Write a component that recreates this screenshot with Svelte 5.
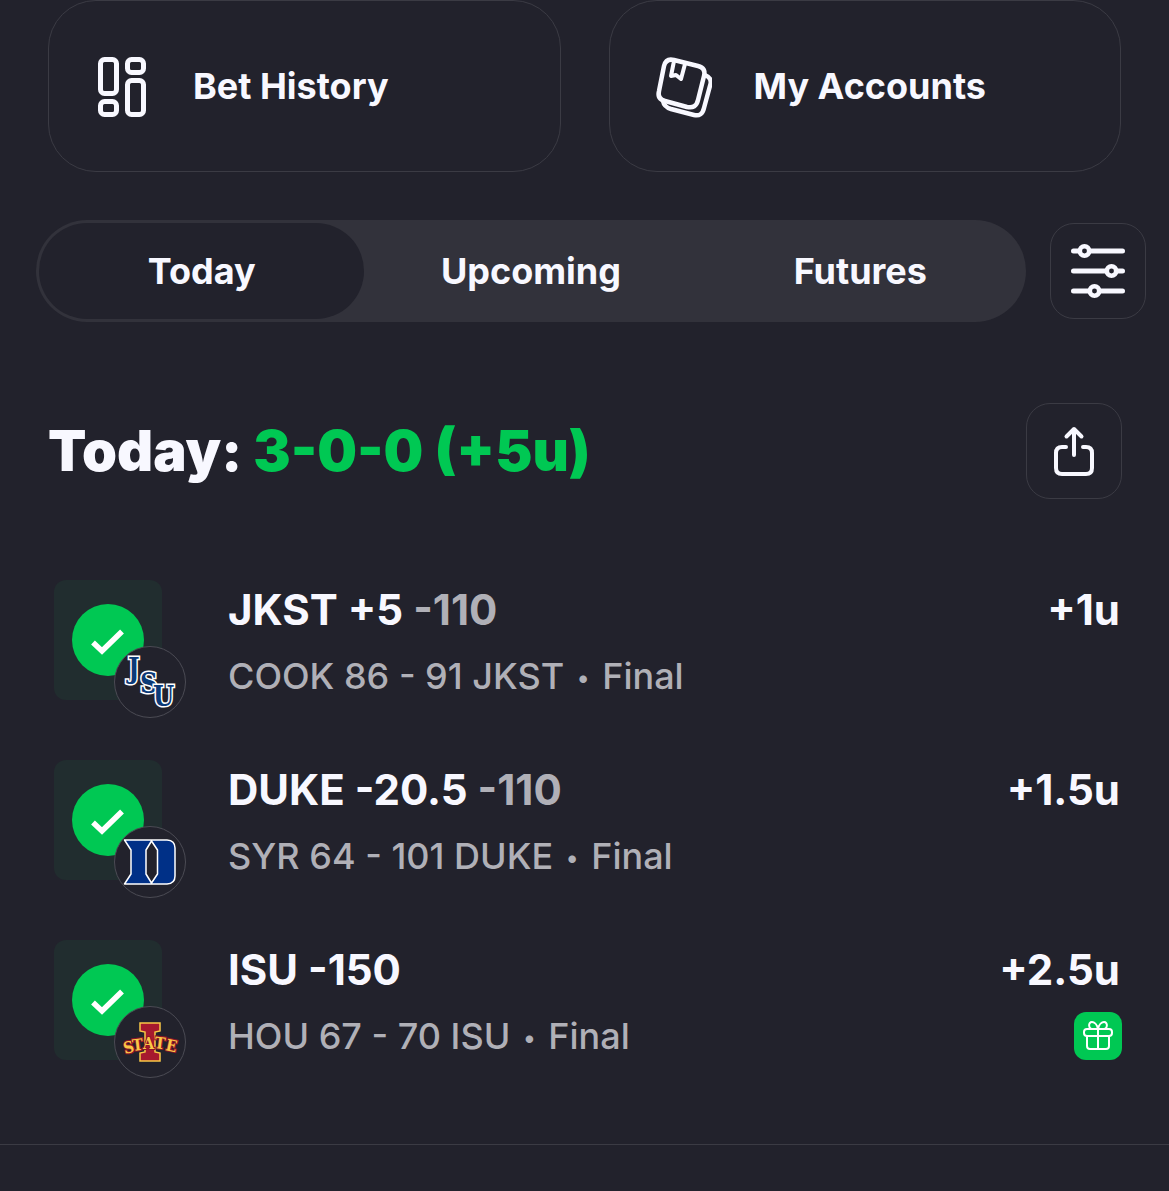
<script>
    const tabs = ["Today", "Upcoming", "Futures"];
    let activeTab = $state("Today");

    const bets = [
        {
            team: "jsu",
            pick: "JKST +5",
            odds: "-110",
            score: "COOK 86 - 91 JKST",
            status: "Final",
            units: "+1u",
        },
        {
            team: "duke",
            pick: "DUKE -20.5",
            odds: "-110",
            score: "SYR 64 - 101 DUKE",
            status: "Final",
            units: "+1.5u",
        },
        {
            team: "isu",
            pick: "ISU -150",
            odds: "",
            score: "HOU 67 - 70 ISU",
            status: "Final",
            units: "+2.5u",
            bonus: true,
        },
    ];
</script>

<main>
    <nav class="links" aria-label="Account">
        <a class="card" href="#history">
            <svg width="60" height="72" viewBox="0 0 60 72" fill="none" stroke="currentColor" stroke-width="5">
                <rect x="9.500" y="9.500" width="16" height="34" rx="4" />
                <rect x="36.500" y="9.500" width="16" height="13" rx="4" />
                <rect x="9.500" y="51.500" width="16" height="13" rx="4" />
                <rect x="36.500" y="30.500" width="16" height="34" rx="4" />
            </svg>
            <span>Bet History</span>
        </a>
        <a class="card" href="#accounts">
            <svg width="60" height="72" viewBox="0 0 60 72" fill="none" stroke="currentColor" stroke-width="4.500" stroke-linejoin="round" stroke-linecap="round">
                <path d="M22 10 L46 16 Q54 18 52 26 L46 50 Q44 59 35 57 L13 51 Q5 49 7 41 L12 16 Q14 8 22 10Z" />
                <path d="M53 25 Q60 28 58.500 34 L52 58 Q50 67 42 65 L19 59 Q12 57 11 51" />
                <path stroke-width="4" d="M22 11 L19 26 L24 25 L29 29 L33 14" />
            </svg>
            <span>My Accounts</span>
        </a>
    </nav>

    <div class="filters">
        <div class="tabs" role="tablist">
            {#each tabs as tab}
                <button
                    role="tab"
                    class:active={activeTab === tab}
                    aria-selected={activeTab === tab}
                    onclick={() => (activeTab = tab)}
                >
                    {tab}
                </button>
            {/each}
        </div>
        <button class="square" aria-label="Filters">
            <svg width="60" height="60" viewBox="0 0 60 60" fill="none" stroke="currentColor" stroke-linecap="round">
                <path stroke-width="5" d="M5.500 10H54.500M5.500 30H54.500M5.500 50H54.500" />
                <g fill="#22222c" stroke-width="4.500">
                    <circle cx="16.500" cy="10" r="4.700" />
                    <circle cx="43.500" cy="30" r="4.700" />
                    <circle cx="26.500" cy="50" r="4.700" />
                </g>
            </svg>
        </button>
    </div>

    <header>
        <h1>Today: <span>3-0-0 (+5u)</span></h1>
        <button class="square" aria-label="Share">
            <svg width="60" height="60" viewBox="0 0 60 60" fill="none" stroke="currentColor" stroke-width="4" stroke-linecap="round" stroke-linejoin="round">
                <path d="M22 26H18Q12 26 12 32V47Q12 53 18 53H42Q48 53 48 47V32Q48 26 42 26H39" />
                <path d="M30 34V8M22.500 15.500L30 8L37.500 15.500" />
            </svg>
        </button>
    </header>

    <ul>
        {#each bets as bet}
            <li>
                <div class="result">
                    <div class="tile">
                        <svg width="72" height="72" viewBox="0 0 72 72" role="img" aria-label="Won">
                            <circle cx="36" cy="36" r="36" fill="#00c853" />
                            <path d="M21 38.500L30 47L50 27.500" fill="none" stroke="#fff" stroke-width="5.500" />
                        </svg>
                    </div>
                    <div class="badge">
                        {#if bet.team === "jsu"}
                            <svg viewBox="0 0 70 70" class="jsu">
                                <text x="13 25 38" y="31 46 59">JSU</text>
                            </svg>
                        {:else if bet.team === "duke"}
                            <svg viewBox="0 0 70 70" stroke="#fff" stroke-width="1.500" stroke-linejoin="round">
                                <path fill="#003087" fill-rule="evenodd" d="M9.500 13H52Q60 13.500 60 21V49Q60 56.500 52 57H9.500L16 47V23ZM36.500 14L31 23V47L36.500 56L42.500 47V23Z" />
                            </svg>
                        {:else}
                            <svg viewBox="0 0 70 70" class="isu">
                                <path fill="#a6192e" stroke="#f9c846" stroke-width="1.500" d="M25 16H45V24L40 25V45L45 46V54H25V46L30 45V25L25 24Z" />
                                <text x="10 18 28 39 50" y="47 44 42 41 43" rotate="-14 -7 0 7 12">STATE</text>
                            </svg>
                        {/if}
                    </div>
                </div>
                <div class="info">
                    <strong>{bet.pick} <span>{bet.odds}</span></strong>
                    <p>{bet.score} <span class="dot">•</span> {bet.status}</p>
                </div>
                <div class="units">
                    <strong>{bet.units}</strong>
                    {#if bet.bonus}
                        <svg class="gift" viewBox="0 0 48 48" fill="none" stroke="#fff" stroke-width="2" stroke-linejoin="round" role="img" aria-label="Bonus bet">
                            <rect x="10" y="17" width="28" height="7" rx="3" />
                            <path d="M13 24V34Q13 37 16 37H32Q35 37 35 34V24M24 17V37" />
                            <path d="M24 17C23 12 20 10 18 10C14 10 14 17 19 17M24 17C25 12 28 10 30 10C34 10 34 17 29 17" />
                        </svg>
                    {/if}
                </div>
            </li>
        {/each}
    </ul>
    <hr />
</main>

<style>
    :global(body) {
        background: #22222c;
        color: #f8f8ff;
        font-family: Inter, sans-serif;
    }

    svg {
        display: block;
        flex-shrink: 0;
    }

    button {
        padding: 0;
        border: 0;
        background: none;
        color: inherit;
        font: inherit;
        cursor: pointer;
    }

    .links {
        display: grid;
        grid-template-columns: 1fr 1fr;
        gap: 48px;
        padding: 0 48px;
    }

    .card {
        display: flex;
        align-items: center;
        gap: 42px;
        padding: 49px 42px;
        border: 1px solid #3b3b44;
        border-radius: 48px;
        color: inherit;
        font-size: 36px;
        font-weight: 700;
        line-height: 48px;
        text-decoration: none;
    }

    .filters {
        display: flex;
        align-items: center;
        gap: 24px;
        padding: 48px 23px 0 36px;
    }

    .tabs {
        display: flex;
        flex: 1;
        gap: 4px;
        padding: 3px;
        border-radius: 52px;
        background: #32323b;
    }

    .tabs button {
        flex: 1;
        border-radius: 48px;
        font-size: 36px;
        font-weight: 700;
        line-height: 96px;
    }

    .tabs .active {
        background: #22222c;
    }

    .square {
        display: flex;
        align-items: center;
        justify-content: center;
        flex-shrink: 0;
        box-sizing: border-box;
        width: 96px;
        height: 96px;
        border: 1px solid #3b3b44;
        border-radius: 24px;
    }

    header {
        display: flex;
        align-items: center;
        justify-content: space-between;
        padding: 81px 47px 0 48px;
    }

    h1 {
        margin: 0;
        font-size: 56px;
        font-weight: 900;
        line-height: 72px;
    }

    h1 span {
        color: #00c853;
    }

    ul {
        display: grid;
        gap: 42px;
        margin: 0;
        padding: 81px 47px 66px 54px;
        list-style: none;
    }

    li {
        display: flex;
    }

    .result {
        position: relative;
        width: 132px;
        height: 138px;
        margin-right: 42px;
    }

    .tile {
        display: flex;
        align-items: center;
        justify-content: center;
        width: 108px;
        height: 120px;
        border-radius: 12px;
        background: #212d2f;
    }

    .badge {
        position: absolute;
        right: 0;
        bottom: 0;
        width: 70px;
        height: 70px;
        border: 1px solid #4b4b54;
        border-radius: 50%;
        background: #22222c;
    }

    .jsu {
        fill: #0b3a78;
        stroke: #fff;
        stroke-width: 3px;
        paint-order: stroke;
        font: bold 27px "DejaVu Serif Condensed", "DejaVu Serif", serif;
    }

    .isu text {
        fill: #f9c846;
        stroke: #8f1527;
        stroke-width: 2px;
        paint-order: stroke;
        font: bold 16px "DejaVu Serif Condensed", "DejaVu Serif", serif;
    }

    .info {
        flex: 1;
    }

    strong {
        display: block;
        font-size: 42px;
        font-weight: 700;
        line-height: 60px;
    }

    strong span {
        color: #b0b0b7;
    }

    p {
        margin: 12px 0 0;
        color: #b0b0b7;
        font-size: 36px;
        font-weight: 500;
        line-height: 48px;
    }

    .dot {
        margin: 0 3px;
        font-size: 24px;
        line-height: 24px;
        vertical-align: 3px;
    }

    .units {
        display: flex;
        flex-direction: column;
        align-items: flex-end;
        gap: 12px;
    }

    .units strong {
        padding-right: 2px;
    }

    .gift {
        width: 48px;
        height: 48px;
        border-radius: 12px;
        background: #00c853;
    }

    hr {
        margin: 0;
        border: 0;
        border-top: 1px solid #3b3b44;
    }
</style>
